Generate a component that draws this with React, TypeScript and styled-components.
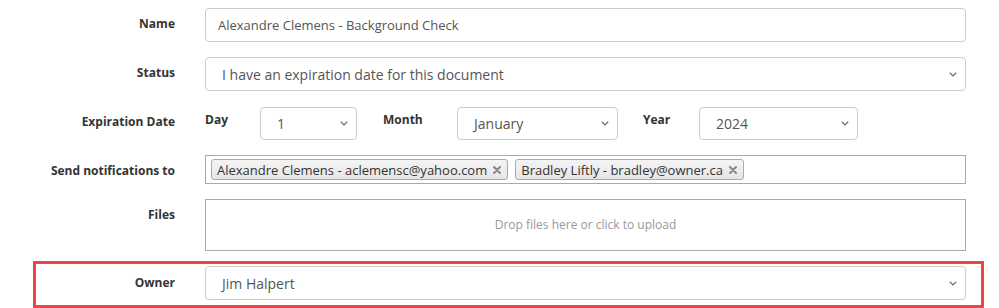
import React from "react";
import styled, { createGlobalStyle } from "styled-components";

const Global = createGlobalStyle`
  html, body { margin: 0; padding: 0; background: #fff; }
  body { font-family: "Open Sans", "Noto Sans", sans-serif; color: #333; }
  * { box-sizing: border-box; }
`;

const Form = styled.div`
  width: 999px;
  height: 308px;
  padding-top: 8px;
  display: flex;
  flex-direction: column;
  overflow: hidden;
`;

const Row = styled.div<{ $mt?: number; $highlight?: boolean }>`
  display: grid;
  grid-template-columns: 139px 761px;
  column-gap: 30px;
  width: 945px;
  margin-left: 36px;
  margin-top: ${(p) => p.$mt ?? 0}px;
  padding: ${(p) => (p.$highlight ? "2px 0 5px" : "0")};
  outline: ${(p) => (p.$highlight ? "3px solid #f44343" : "none")};
`;

const Label = styled.div<{ $pt?: number }>`
  text-align: right;
  font-size: 12px;
  font-weight: 700;
  line-height: 18px;
  padding-top: ${(p) => p.$pt ?? 7}px;
  color: #333;
  white-space: nowrap;
`;

const TextInput = styled.div`
  height: 34px;
  border: 1px solid #ccc;
  border-radius: 4px;
  padding: 0 12px;
  display: flex;
  align-items: center;
  font-size: 13px;
  color: #555;
`;

const SelectBox = styled.div<{ $w?: number; $h?: number }>`
  width: ${(p) => (p.$w ? `${p.$w}px` : "100%")};
  height: ${(p) => p.$h ?? 34}px;
  border: 1px solid #ccc;
  border-radius: 4px;
  padding: 0 8px 0 16px;
  display: flex;
  align-items: center;
  justify-content: space-between;
  font-size: 14px;
  color: #555;
  flex-shrink: 0;
`;

const Chevron = () => (
  <svg width="8" height="5" viewBox="0 0 8 5" fill="none">
    <path d="M0.8 0.8 L4 3.9 L7.2 0.8" stroke="#6a6a6a" strokeWidth="1.2" />
  </svg>
);

const Select = ({ value, w, h }: { value: string; w?: number; h?: number }) => (
  <SelectBox $w={w} $h={h}>
    <span>{value}</span>
    <Chevron />
  </SelectBox>
);

const DateGroup = styled.div`
  display: flex;
  align-items: flex-start;
`;

const DateLabel = styled.div<{ $w: number; $ml?: number }>`
  width: ${(p) => p.$w}px;
  margin-left: ${(p) => p.$ml ?? 0}px;
  font-size: 12px;
  font-weight: 700;
  line-height: 18px;
  padding-top: 4px;
  color: #333;
  flex-shrink: 0;
`;

const TagBox = styled.div`
  height: 29px;
  border: 1px solid #aaa;
  padding: 3px 5px;
  display: flex;
  align-items: center;
  gap: 7px;
`;

const Tag = styled.div`
  height: 21px;
  border: 1px solid #aaa;
  border-radius: 3px;
  background: linear-gradient(#f4f4f4, #e6e6e6);
  padding: 0 6px 0 5px;
  display: flex;
  align-items: center;
  gap: 6px;
  font-size: 13px;
  color: #333;
  white-space: nowrap;
`;

const TagX = () => (
  <svg width="8" height="8" viewBox="0 0 8 8">
    <path d="M1 1 L7 7 M7 1 L1 7" stroke="#888" strokeWidth="2" strokeLinecap="round" />
  </svg>
);

const DropZone = styled.div`
  height: 52px;
  border: 1px solid #aaa;
  display: flex;
  align-items: center;
  justify-content: center;
  font-size: 12px;
  color: #999;
  padding-bottom: 1px;
`;

export default function App() {
  return (
    <>
      <Global />
      <Form>
        <Row>
          <Label>Name</Label>
          <TextInput>Alexandre Clemens - Background Check</TextInput>
        </Row>
        <Row $mt={15}>
          <Label>Status</Label>
          <Select value="I have an expiration date for this document" />
        </Row>
        <Row $mt={16}>
          <Label $pt={6}>Expiration Date</Label>
          <DateGroup>
            <DateLabel $w={55}>Day</DateLabel>
            <Select value="1" w={97} h={33} />
            <DateLabel $w={74} $ml={26}>Month</DateLabel>
            <Select value="January" w={161} h={33} />
            <DateLabel $w={56} $ml={25}>Year</DateLabel>
            <Select value="2024" w={159} h={33} />
          </DateGroup>
        </Row>
        <Row $mt={15}>
          <Label $pt={7}>Send notifications to</Label>
          <TagBox>
            <Tag>
              Alexandre Clemens - aclemensc@yahoo.com <TagX />
            </Tag>
            <Tag>
              Bradley Liftly - bradley@owner.ca <TagX />
            </Tag>
          </TagBox>
        </Row>
        <Row $mt={15}>
          <Label $pt={7}>Files</Label>
          <DropZone>Drop files here or click to upload</DropZone>
        </Row>
        <Row $mt={13} $highlight>
          <Label $pt={8}>Owner</Label>
          <Select value="Jim Halpert" />
        </Row>
      </Form>
    </>
  );
}
